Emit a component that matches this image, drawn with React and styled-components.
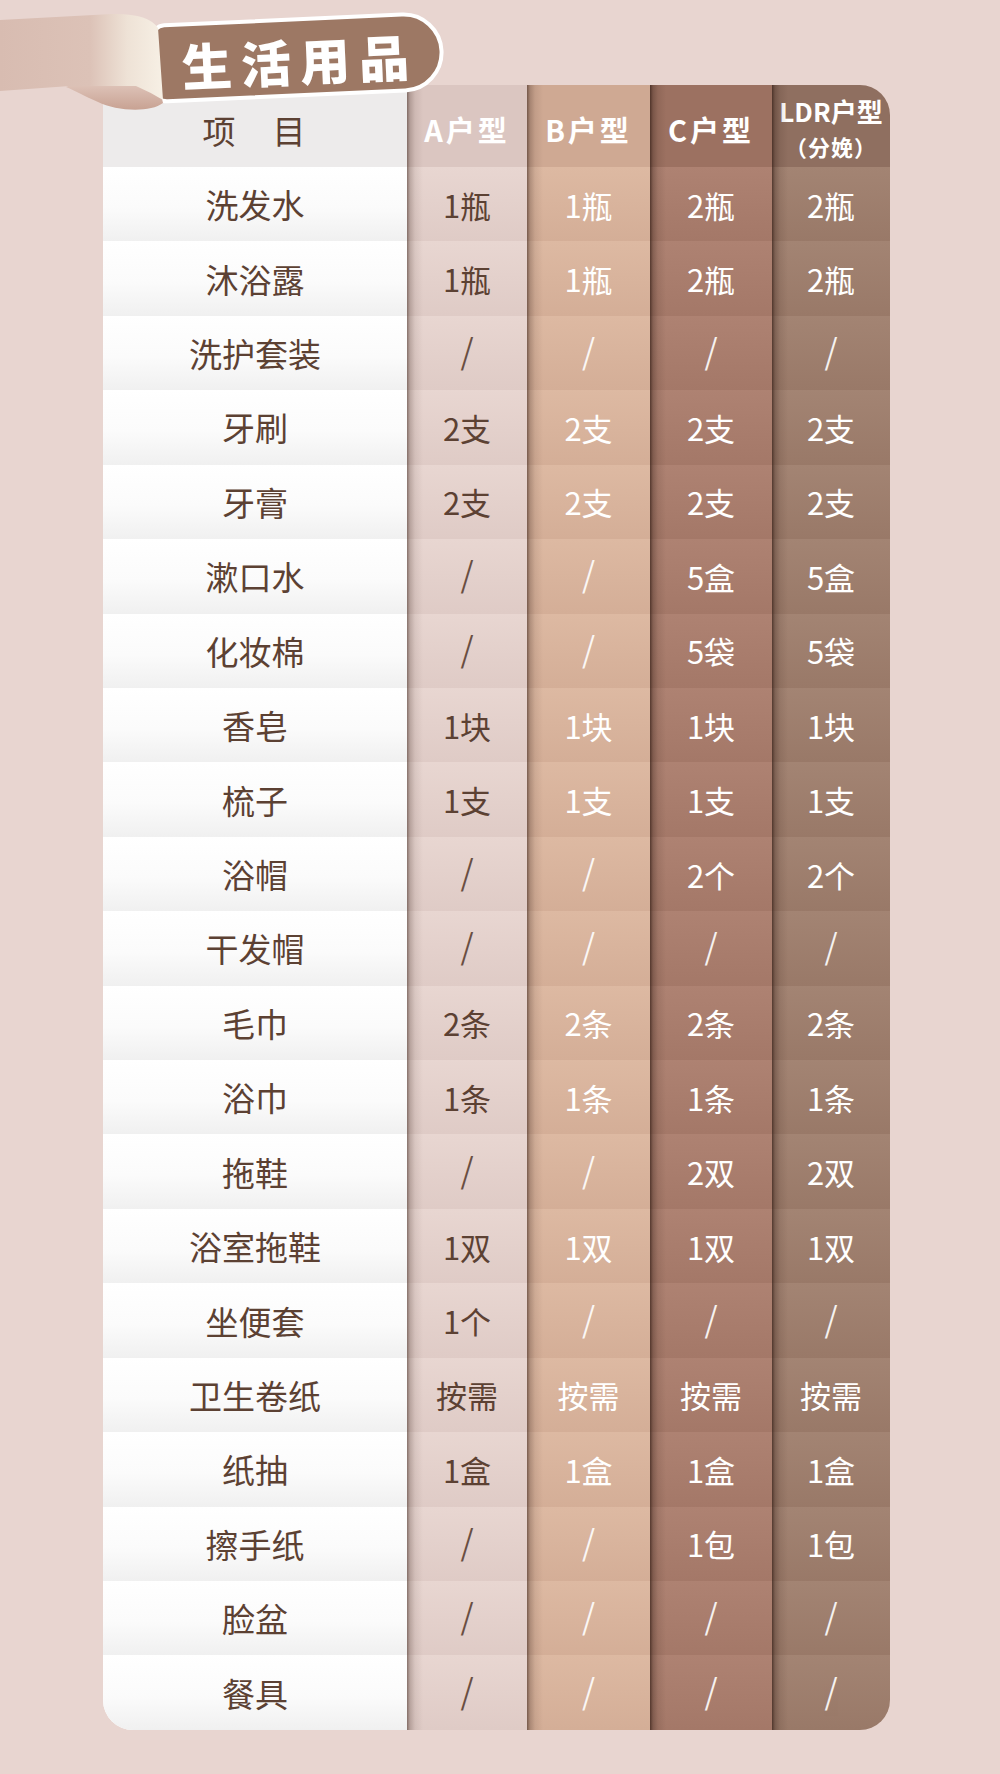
import React from 'react';
import styled, { createGlobalStyle } from 'styled-components';

const GlobalStyle = createGlobalStyle`
  html, body {
    margin: 0;
    padding: 0;
    background: #e8d5d0;
  }
  body {
    font-family: "Noto Sans CJK SC", "Noto Sans", sans-serif;
  }
`;

const ROW_H = 74.43;
const HEAD_H = 82;

const Page = styled.div`
  position: relative;
  width: 1000px;
  height: 1774px;
  padding: 85px 0 0 103px;
  box-sizing: border-box;
  background: #e8d5d0;
  overflow: hidden;
`;

const Table = styled.div`
  display: flex;
  width: 787px;
`;

const ItemColumn = styled.div`
  display: flex;
  flex-direction: column;
  width: 304px;
  border-bottom-left-radius: 30px;
  overflow: hidden;
  background: #fff;
`;

const ItemHead = styled.div`
  height: ${HEAD_H}px;
  display: flex;
  align-items: center;
  justify-content: center;
  padding-top: 8px;
  box-sizing: border-box;
  background: #edebeb;
  color: #5c4133;
  font-size: 33px;
  letter-spacing: 2px;
`;

const ItemCell = styled.div`
  height: ${ROW_H}px;
  display: flex;
  align-items: center;
  justify-content: center;
  background: linear-gradient(to bottom, #ffffff 0%, #fbfbfb 55%, #f0f0f0 100%);
  color: #5c4133;
  font-size: 33px;
`;

const TypeColumn = styled.div`
  position: relative;
  display: flex;
  flex-direction: column;
  width: ${(p) => p.$w}px;
  border-top-right-radius: ${(p) => (p.$last ? '30px' : '0')};
  border-bottom-right-radius: ${(p) => (p.$last ? '30px' : '0')};
  overflow: hidden;

  &::before {
    content: '';
    position: absolute;
    top: 0;
    bottom: 0;
    left: 0;
    width: 16px;
    pointer-events: none;
    background: linear-gradient(
      to right,
      rgba(55, 32, 24, ${(p) => p.$shade}) 0px,
      rgba(55, 32, 24, ${(p) => p.$shade * 0.45}) 3px,
      rgba(55, 32, 24, ${(p) => p.$shade * 0.15}) 8px,
      rgba(55, 32, 24, 0) 16px
    );
  }
`;

const TypeHead = styled.div`
  height: ${HEAD_H}px;
  display: flex;
  flex-direction: column;
  align-items: center;
  justify-content: center;
  gap: ${(p) => (p.$small ? 11 : 0)}px;
  padding-top: ${(p) => (p.$small ? 2 : 6)}px;
  box-sizing: border-box;
  background: ${(p) => p.$bg};
  color: #fff;
  font-size: ${(p) => (p.$small ? 26 : 29)}px;
  font-weight: 700;
  letter-spacing: ${(p) => (p.$small ? 0 : 3)}px;
  line-height: 1;
  white-space: nowrap;
`;

const SubLabel = styled.span`
  font-size: 22px;
  letter-spacing: 1px;
  line-height: 1;
`;

const ValueCell = styled.div`
  height: ${ROW_H}px;
  display: flex;
  align-items: center;
  justify-content: center;
  background: linear-gradient(to bottom, ${(p) => p.$top} 0%, ${(p) => p.$bottom} 100%);
  color: ${(p) => p.$color};
  font-size: 31px;
`;

const Slash = styled.span`
  font-family: "DejaVu Sans", sans-serif;
  font-size: 40px;
  font-weight: 200;
  line-height: 1;
  opacity: 0.9;
`;

const Tab = styled.div`
  position: absolute;
  left: 150px;
  top: 24px;
  width: 292px;
  height: 80px;
  box-sizing: border-box;
  border: 4px solid #fff;
  border-radius: 14px 40px 40px 14px;
  background: #9d7864;
  transform: rotate(-2.6deg);
  transform-origin: left top;
  display: flex;
  align-items: center;
  padding: 4px 0 0 26px;
  color: #fff;
  font-size: 50px;
  font-weight: 900;
  letter-spacing: 9px;
  white-space: nowrap;
`;

const Tape = styled.svg`
  position: absolute;
  left: 0;
  top: 0;
`;

const types = [
  { label: 'A户型', w: 120, head: '#dbc6c1', top: '#e8d6d1', bottom: '#dfcbc6', color: '#5c4133', shade: 0.55 },
  { label: 'B户型', w: 123, head: '#cfa993', top: '#ddb9a2', bottom: '#d4ae97', color: '#fff', shade: 0.6 },
  { label: 'C户型', w: 122, head: '#9c7161', top: '#ae8272', bottom: '#a47868', color: '#fff', shade: 0.75 },
  { label: 'LDR户型', sub: '（分娩）', w: 118, head: '#8f6f60', top: '#a38473', bottom: '#997968', color: '#fff', shade: 0.75 },
];

const rows = [
  ['洗发水', '1瓶', '1瓶', '2瓶', '2瓶'],
  ['沐浴露', '1瓶', '1瓶', '2瓶', '2瓶'],
  ['洗护套装', '/', '/', '/', '/'],
  ['牙刷', '2支', '2支', '2支', '2支'],
  ['牙膏', '2支', '2支', '2支', '2支'],
  ['漱口水', '/', '/', '5盒', '5盒'],
  ['化妆棉', '/', '/', '5袋', '5袋'],
  ['香皂', '1块', '1块', '1块', '1块'],
  ['梳子', '1支', '1支', '1支', '1支'],
  ['浴帽', '/', '/', '2个', '2个'],
  ['干发帽', '/', '/', '/', '/'],
  ['毛巾', '2条', '2条', '2条', '2条'],
  ['浴巾', '1条', '1条', '1条', '1条'],
  ['拖鞋', '/', '/', '2双', '2双'],
  ['浴室拖鞋', '1双', '1双', '1双', '1双'],
  ['坐便套', '1个', '/', '/', '/'],
  ['卫生卷纸', '按需', '按需', '按需', '按需'],
  ['纸抽', '1盒', '1盒', '1盒', '1盒'],
  ['擦手纸', '/', '/', '1包', '1包'],
  ['脸盆', '/', '/', '/', '/'],
  ['餐具', '/', '/', '/', '/'],
];

const TapeCurl = () => (
  <Tape width="175" height="120" viewBox="0 0 175 120">
    <defs>
      <linearGradient id="band" x1="0" y1="0" x2="1" y2="0">
        <stop offset="0" stopColor="#d8bcb1" />
        <stop offset="0.55" stopColor="#dcc2b7" />
        <stop offset="0.78" stopColor="#eee2d6" />
        <stop offset="1" stopColor="#f7f0e5" />
      </linearGradient>
      <linearGradient id="lobe" x1="0" y1="0" x2="0" y2="1">
        <stop offset="0" stopColor="#e3cbc1" />
        <stop offset="1" stopColor="#c8a293" />
      </linearGradient>
    </defs>
    <path d="M66 87 C90 76 138 74 160 90 L163 103 C150 113 116 111 98 102 C84 96 76 91 66 87 Z" fill="url(#lobe)" />
    <path d="M0 20 L112 14 Q148 13 158 28 L163 100 Q150 92 136 86 L70 86 L0 91 Z" fill="url(#band)" />
  </Tape>
);

export default function App() {
  return (
    <>
      <GlobalStyle />
      <Page>
        <Table>
          <ItemColumn>
            <ItemHead>项　目</ItemHead>
            {rows.map((r) => (
              <ItemCell key={r[0]}>{r[0]}</ItemCell>
            ))}
          </ItemColumn>
          {types.map((t, ci) => (
            <TypeColumn key={t.label} $w={t.w} $shade={t.shade} $last={ci === types.length - 1}>
              <TypeHead $bg={t.head} $small={!!t.sub}>
                <span>{t.label}</span>
                {t.sub && <SubLabel>{t.sub}</SubLabel>}
              </TypeHead>
              {rows.map((r) => (
                <ValueCell key={r[0]} $top={t.top} $bottom={t.bottom} $color={t.color}>
                  {r[ci + 1] === '/' ? <Slash>/</Slash> : r[ci + 1]}
                </ValueCell>
              ))}
            </TypeColumn>
          ))}
        </Table>
        <Tab>生活用品</Tab>
        <TapeCurl />
      </Page>
    </>
  );
}
